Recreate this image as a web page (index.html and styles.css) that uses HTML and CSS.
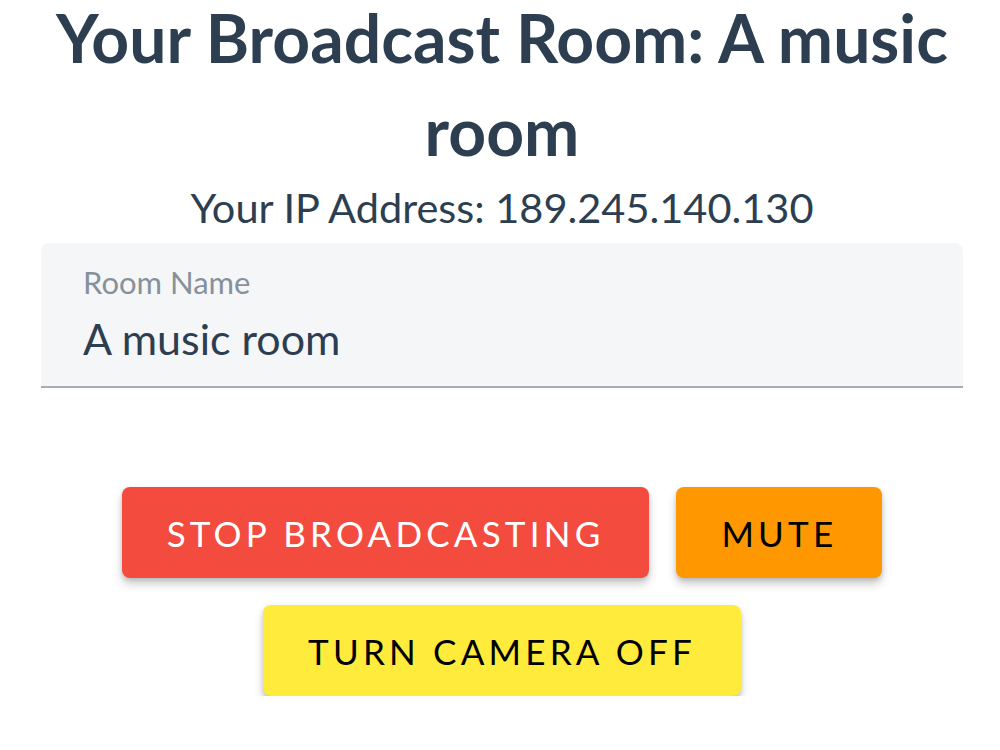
FILE: index.html
```html
<!DOCTYPE html>
<html lang="en">
    <head>
        <meta charset="utf-8"/>
        <title>Broadcast Room</title>
        <link rel="stylesheet" href="styles.css">
    </head>
    <body>
        <div class="room">
            <h1 class="room-title">Your Broadcast Room: A music room</h1>
            <p class="room-ip">Your IP Address: 189.245.140.130</p>
            <div class="field">
                <label class="field-label" for="roomName">Room Name</label>
                <input class="field-input" id="roomName" type="text" value="A music room">
            </div>
            <div class="actions">
                <button class="btn btn-red">Stop Broadcasting</button>
                <button class="btn btn-orange">Mute</button>
                <button class="btn btn-yellow">Turn Camera Off</button>
            </div>
        </div>
    </body>
</html>
```

FILE: styles.css
```css
body {
    margin: 0;
    background: #fff;
    font-family: Lato, "Open Sans", sans-serif;
    color: #2c3e50;
}

.room {
    margin: 0 37px 0 41px;
}

.room-title {
    margin: -9px 0 0;
    font-size: 66px;
    font-weight: 700;
    line-height: 93px;
    text-align: center;
}

.room-ip {
    margin: 0;
    font-size: 41.5px;
    font-weight: 400;
    line-height: 60px;
    text-align: center;
}

.field {
    display: flex;
    flex-direction: column;
    margin-top: 6px;
    padding: 20px 42px 21px;
    background: #f5f6f8;
    border-radius: 8px 8px 0 0;
    border-bottom: 2px solid #a4adb6;
}

.field-label {
    font-size: 31px;
    color: #87919c;
    line-height: 38px;
}

.field-input {
    margin-top: 12px;
    padding: 0;
    border: 0;
    background: transparent;
    font-family: inherit;
    font-size: 43px;
    line-height: 52px;
    color: #2c3e50;
    outline: none;
}

.actions {
    display: flex;
    flex-wrap: wrap;
    justify-content: center;
    gap: 27px;
    margin-top: 99px;
    padding: 0 60px;
}

.btn {
    height: 91px;
    padding: 0 45px;
    border: 0;
    border-radius: 8px;
    font-family: inherit;
    font-size: 35px;
    font-weight: 400;
    letter-spacing: 4.2px;
    text-transform: uppercase;
    box-shadow: 0 6px 10px rgba(0, 0, 0, 0.2), 0 2px 4px rgba(0, 0, 0, 0.12);
    cursor: pointer;
}

.btn-red {
    background: #f44b3f;
    color: #fff;
}

.btn-orange {
    background: #ff9800;
    color: #000;
}

.btn-yellow {
    background: #ffeb3b;
    color: #000;
}
```
